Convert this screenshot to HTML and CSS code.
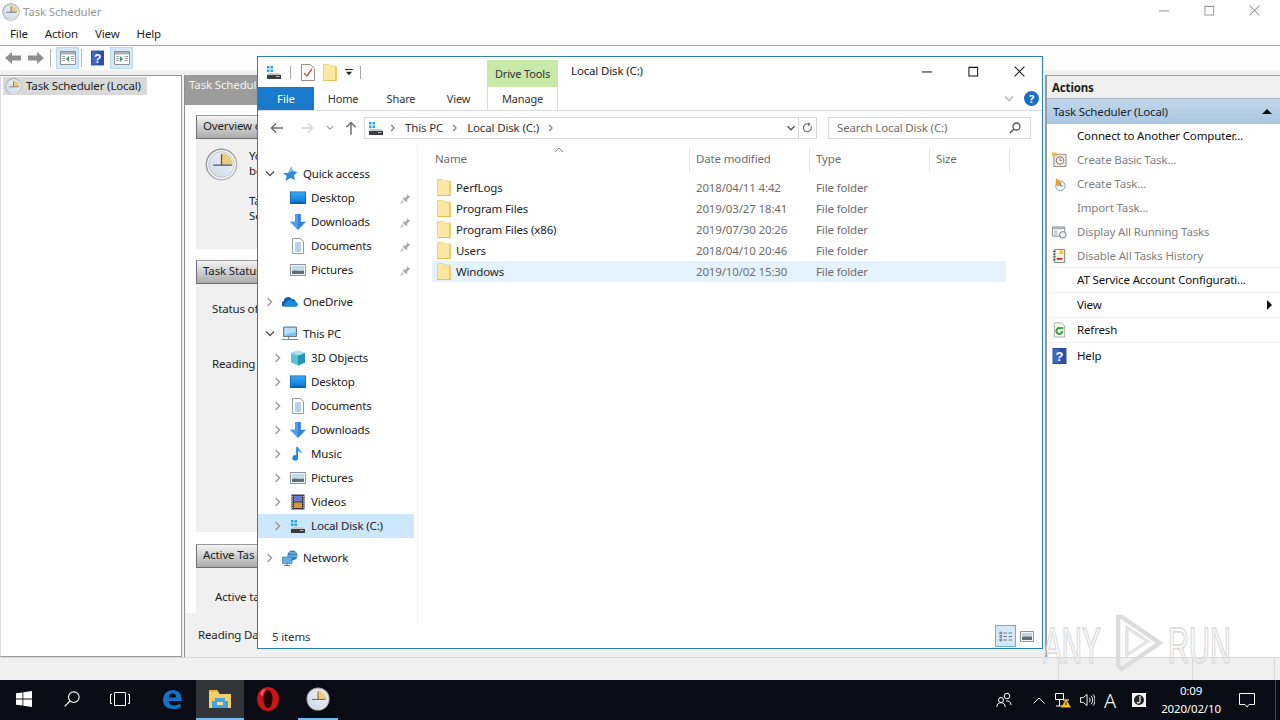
FILE: index.html
```html
<!DOCTYPE html>
<html lang="en">
<head>
  <meta charset="UTF-8" />
  <meta name="viewport" content="width=device-width, initial-scale=1.0" />
  <title>Task Scheduler</title>
  <link rel="stylesheet" href="styles.css">
</head>
<body>
  <svg class="icon-defs" width="0" height="0">
    <defs>
      <linearGradient id="faceGrad" x1="0" y1="1" x2="1" y2="0">
        <stop offset="0" stop-color="#c9d9e8" /><stop offset="1" stop-color="#f6f6f6" />
      </linearGradient>
      <linearGradient id="ringGrad" x1="0" y1="0" x2="1" y2="1">
        <stop offset="0" stop-color="#8b8b8b" /><stop offset="1" stop-color="#c4c4c4" />
      </linearGradient>
      <linearGradient id="blueGrad" x1="0" y1="0" x2="0" y2="1">
        <stop offset="0" stop-color="#39a7f5" /><stop offset="1" stop-color="#0f78d8" />
      </linearGradient>
      <symbol id="i-clock" viewBox="0 0 32 32">
        <circle cx="16" cy="16" r="15.4" fill="url(#ringGrad)" />
        <circle cx="16" cy="16" r="14" fill="#f7f7f7" />
        <circle cx="16" cy="16" r="12.4" fill="url(#faceGrad)" stroke="#a9b1ba" stroke-width=".6" />
        <path d="M16 16V5a11 11 0 0 1 11 11z" fill="#eccb7c" />
        <path d="M16 6v11M8 16.500h18" stroke="#4d5259" stroke-width="1.200" fill="none" />
      </symbol>
      <symbol id="i-drive" viewBox="0 0 16 16">
        <path d="M1 2h2.500v2.500H1zM4.500 2H7v2.500H4.500zM1 5.500h2.500V8H1zM4.500 5.500H7V8H4.500z" fill="#24a5e6" />
        <path d="M2 9h11l2 2H1z" fill="#c9ccce" />
        <path d="M1 11h14v4H1z" fill="#3a3d40" />
        <path d="M10 12.500h3.500" stroke="#b8bcc0" />
      </symbol>
      <symbol id="i-folder" viewBox="0 0 14 17">
        <path d="M.5.500h5.500l1.500 1.500h6v14.500H.5z" fill="#fde7a2" stroke="#eccb6e" stroke-width=".8" />
        <path d="M12 2.500h1.500v14H12z" fill="#efc95c" />
        <path d="M.5 16.500h13" stroke="#e6bf58" />
      </symbol>
      <symbol id="i-desktop" viewBox="0 0 16 16">
        <path d="M0 1.500h16v12.500H0z" fill="#085f9e" />
        <path d="M.7 2.200h14.600v10.800H.7z" fill="url(#blueGrad)" />
        <path d="M3 12.200h10" stroke="#0a5fa5" />
      </symbol>
      <symbol id="i-download" viewBox="0 0 16 16">
        <path d="M5.200 0h5.600v7.800H16L8 16 0 7.800h5.200z" fill="#2f84d8" />
        <path d="M5.200 0h2.800v15L0 7.800h5.200z" fill="#4d9fe8" />
      </symbol>
      <symbol id="i-doc" viewBox="0 0 16 16">
        <path d="M2.500 .5h8l3 3v12h-11z" fill="#fff" stroke="#93989e" />
        <path d="M5 5h6M5 7h6M5 9h6M5 11h6M5 13h6" stroke="#6da2d4" />
      </symbol>
      <symbol id="i-pictures" viewBox="0 0 16 16">
        <path d="M.5 2.500h15v11H.5z" fill="#f4f6f7" stroke="#8d9398" />
        <path d="M2 4h12v4.500H2z" fill="#c5dbea" />
        <path d="M2 9c4-1.500 8 .5 12-.5V12H2z" fill="#5d6e77" />
      </symbol>
      <symbol id="i-pin" viewBox="0 0 12 12">
        <path d="M7.500 .8l3.700 3.700-1.400.5-2 2 .1 2-1 1-4-4 1-1 2 .1 2-2z" fill="#a3a7ab" />
        <path d="M3.500 8.500L.8 11.200" stroke="#a3a7ab" stroke-width="1.200" />
      </symbol>
      <symbol id="i-star" viewBox="0 0 16 16">
        <path d="M9.500 .5l1.300 4.600L15.500 6l-3.600 3.200 1 5-4.300-2.300L3.500 15l1.200-5L1 7h5z" fill="#2e8ad8" />
        <path d="M6 7l3.500-6.500 1.300 4.600z" fill="#86c3f0" />
      </symbol>
      <symbol id="i-onedrive" viewBox="0 0 16 16">
        <path d="M1 12.500a3 3 0 0 1 .7-5.500 4.500 4.500 0 0 1 8.300-1.800 3.300 3.300 0 0 1 3.800 3 2.300 2.300 0 0 1 .7 4.300z" fill="#0a5cab" />
        <path d="M3.500 12.500a2.300 2.300 0 0 1 1-4.300 3.500 3.500 0 0 1 6.200-1 2.800 2.800 0 0 1 3 1.300 2.200 2.200 0 0 1 .6 4z" fill="#1d8ae0" />
      </symbol>
      <symbol id="i-pc" viewBox="0 0 16 16">
        <path d="M1.500 1h13v9.500h-13z" fill="#7cc5f2" stroke="#6b7c88" />
        <path d="M2.500 2h11v4L2.500 9z" fill="#b6e1fa" />
        <path d="M6.500 11v2M0 13.500h16" stroke="#7e8c96" stroke-width="1.200" />
      </symbol>
      <symbol id="i-cube" viewBox="0 0 16 16">
        <path d="M8 .5l7 2.500v9.500L8 15.500 1 12.500V3z" fill="#5fc3d6" />
        <path d="M8 5.500v10l7-3V3z" fill="#1f96b4" />
        <path d="M1 3l7 2.500L15 3 8 .5z" fill="#a9e6ee" />
      </symbol>
      <symbol id="i-music" viewBox="0 0 16 16">
        <path d="M8 1v10.800a2.800 2.800 0 1 1-1.800-2.600V1z" fill="#1a86dc" />
        <path d="M8 1c.3 2.500 4 3 3.500 7-.8-1.800-2-2.400-3.500-2.800z" fill="#3aa0ea" />
      </symbol>
      <symbol id="i-video" viewBox="0 0 16 16">
        <path d="M1.500 .5h13v15h-13z" fill="#3a3f4a" />
        <path d="M4 2h8v5.500H4z" fill="#6f79c9" />
        <path d="M4 8.500h8V14H4z" fill="#d3963c" />
        <path d="M2.500 2v12M13.500 2v12" stroke="#d5d5d5" stroke-dasharray="1 1.200" />
      </symbol>
      <symbol id="i-network" viewBox="0 0 16 16">
        <circle cx="10.500" cy="5.500" r="5" fill="#2e7fc4" />
        <path d="M7.500 3h6M6 6h9" stroke="#c9e1f3" stroke-width=".8" />
        <path d="M.5 7h9.500v6.500H.5z" fill="#59b0ec" stroke="#5d7488" stroke-width=".7" />
        <path d="M5 13.500V15M2 15.500h6" stroke="#607384" />
      </symbol>
      <symbol id="i-chev-right" viewBox="0 0 8 10">
        <path d="M1.500 1l4 4-4 4" fill="none" stroke="currentColor" stroke-width="1.500" />
      </symbol>
      <symbol id="i-chev-down" viewBox="0 0 10 8">
        <path d="M1 1.500l4 4 4-4" fill="none" stroke="currentColor" stroke-width="1.500" />
      </symbol>
      <symbol id="i-arrow-left" viewBox="0 0 16 14">
        <path d="M7 1.500L1.500 7 7 12.500M2 7h13" fill="none" stroke="currentColor" stroke-width="1.700" />
      </symbol>
      <symbol id="i-min" viewBox="0 0 12 12"><path d="M0 6.500h11" stroke="currentColor" fill="none" stroke-width="1.100" /></symbol>
      <symbol id="i-max" viewBox="0 0 12 12"><path d="M1 1.500h9.500V11H1z" stroke="currentColor" fill="none" stroke-width="1.100" /></symbol>
      <symbol id="i-close" viewBox="0 0 12 12"><path d="M.7.700l10.600 10.600M11.300.7L.7 11.300" stroke="currentColor" fill="none" stroke-width="1.100" /></symbol>
      <symbol id="i-help" viewBox="0 0 14 16">
        <path d="M0 0h14v16H0z" fill="#2b4ea8" />
        <path d="M1 1h6v14H1z" fill="#3f68c6" />
        <text x="7" y="13" text-anchor="middle" font-family="Liberation Sans" font-weight="700" font-size="13" fill="#fff">?</text>
      </symbol>
    </defs>
  </svg>

  <div class="app">
    <div class="app-title">
      <svg class="app-title-icon"><use href="#i-clock" /></svg>
      <span>Task Scheduler</span>
      <div class="app-controls">
        <svg><use href="#i-min" /></svg>
        <svg><use href="#i-max" /></svg>
        <svg><use href="#i-close" /></svg>
      </div>
    </div>
    <div class="menu-bar">
      <span>File</span><span>Action</span><span>View</span><span>Help</span>
    </div>
    <div class="tool-bar">
      <svg class="tool-arrow" viewBox="0 0 16 14"><path d="M0 7l7-6v3.500h9v5H7V13z" fill="#8f8f8f" /></svg>
      <svg class="tool-arrow" viewBox="0 0 16 14"><path d="M16 7L9 1v3.500H0v5h9V13z" fill="#8f8f8f" /></svg>
      <div class="tool-sep"></div>
      <div class="tool-btn">
        <svg viewBox="0 0 16 14"><path d="M.5.500h15v13H.5z" fill="#fff" stroke="#8b9298" /><path d="M1 1h14v2.500H1z" fill="#aab2b8" /><path d="M2 5h3v1H2zM2 7h3v1H2zM2 9h3v1H2zM11 5h3v1h-3zM11 7h3v1h-3zM11 9h3v1h-3z" fill="#9aa3aa" /><path d="M9 5v6L6 8z" fill="#3aa04a" /></svg>
      </div>
      <div class="tool-sep tool-sep-narrow"></div>
      <svg class="tool-help"><use href="#i-help" /></svg>
      <div class="tool-btn">
        <svg viewBox="0 0 16 14"><path d="M.5.500h15v13H.5z" fill="#fff" stroke="#8b9298" /><path d="M1 1h14v2.500H1z" fill="#aab2b8" /><path d="M2 5h3v1H2zM2 7h3v1H2zM2 9h3v1H2zM11 5h3v1h-3zM11 7h3v1h-3zM11 9h3v1h-3z" fill="#9aa3aa" /><path d="M6 5v6l3-3z" fill="#3aa04a" /></svg>
      </div>
    </div>

    <div class="app-main">
      <div class="tree-pane">
        <div class="tree-row">
          <svg><use href="#i-clock" /></svg>
          <span>Task Scheduler (Local)</span>
        </div>
      </div>

      <div class="center-pane">
        <div class="center-head">Task Schedul</div>
        <div class="center-body">
          <div class="section">
            <div class="section-head">Overview of</div>
            <div class="section-body overview-body">
              <svg class="overview-clock"><use href="#i-clock" /></svg>
              <div class="overview-text">
                <p>Yo<br>be</p>
                <p>Ta<br>Se</p>
              </div>
            </div>
          </div>
          <div class="section">
            <div class="section-head">Task Status</div>
            <div class="section-body status-body">
              <p class="status-line">Status of</p>
              <p class="status-line">Reading</p>
            </div>
          </div>
          <div class="section">
            <div class="section-head">Active Tas</div>
            <div class="section-body active-body">
              <p>Active ta</p>
            </div>
          </div>
        </div>
        <div class="center-foot">Reading Da</div>
      </div>

      <div class="actions-pane">
        <div class="actions-head">Actions</div>
        <div class="actions-group">
          <span>Task Scheduler (Local)</span>
          <i class="tri-up"></i>
        </div>
        <div class="action"><span class="action-icon"></span><span>Connect to Another Computer...</span></div>
        <div class="action action-off">
          <span class="action-icon">
            <svg viewBox="0 0 16 16"><path d="M2 2h13v13H2z" fill="#efe9dc" stroke="#8d8a82" /><circle cx="8.500" cy="8.500" r="4" fill="#fff" stroke="#7d6a58" /><path d="M8.500 6v2.500h2" stroke="#7d6a58" fill="none" /><path d="M0 0h5v4H0z" fill="#f2b84c" /></svg>
          </span><span>Create Basic Task...</span>
        </div>
        <div class="action action-off">
          <span class="action-icon">
            <svg viewBox="0 0 16 16"><circle cx="9" cy="10" r="5" fill="#fff" stroke="#6ea0c6" /><path d="M4 2l3 1.500 3 4-3 3-3-1z" fill="#eb9f32" /><path d="M9 7v3h3" stroke="#54718a" fill="none" /></svg>
          </span><span>Create Task...</span>
        </div>
        <div class="action action-off"><span class="action-icon"></span><span>Import Task...</span></div>
        <div class="action action-off">
          <span class="action-icon">
            <svg viewBox="0 0 16 16"><path d="M.5 2.500h13v10H.5z" fill="#fff" stroke="#8a9095" /><path d="M1 3h12v2H1z" fill="#a4adb3" /><path d="M2 7h4M2 9h4M2 11h4" stroke="#a6acb1" /><circle cx="11.500" cy="11" r="3.500" fill="#e9eef2" stroke="#6d767d" /></svg>
          </span><span>Display All Running Tasks</span>
        </div>
        <div class="action action-off action-line">
          <span class="action-icon">
            <svg viewBox="0 0 16 16"><path d="M2.500 1h11v14h-11z" fill="#f8f3df" stroke="#7e7e7e" /><path d="M1 3h3M1 6h3M1 9h3M1 12h3" stroke="#444" /><path d="M8 2h4v4H8z" fill="#eec23f" /><path d="M5 11h6" stroke="#b3363a" stroke-width="2" /></svg>
          </span><span>Disable All Tasks History</span>
        </div>
        <div class="action action-tall action-line"><span class="action-icon"></span><span>AT Service Account Configurati...</span></div>
        <div class="action action-tall action-line">
          <span class="action-icon"></span><span>View</span><i class="tri-right"></i>
        </div>
        <div class="action action-tall action-line">
          <span class="action-icon">
            <svg viewBox="0 0 16 16"><path d="M2.500 .5h8l3 3v12h-11z" fill="#f4f7f2" stroke="#a5aaa4" /><path d="M11 9a3.200 3.200 0 1 1-1-2.300" fill="none" stroke="#2f9e3e" stroke-width="2" /><path d="M9 5h3v3z" fill="#2f9e3e" /></svg>
          </span><span>Refresh</span>
        </div>
        <div class="action action-tall">
          <span class="action-icon"><svg><use href="#i-help" /></svg></span><span>Help</span>
        </div>
      </div>
    </div>

    <div class="app-status">
      <div class="status-cell status-cell-wide"></div>
      <div class="status-cell"></div>
      <div class="status-cell status-cell-end"></div>
    </div>
  </div>

  <!-- explorer window, sits on top of task scheduler -->
  <div class="explorer">
    <div class="ex-title">
      <div class="qat">
        <svg class="qat-drive"><use href="#i-drive" /></svg>
        <div class="qat-sep"></div>
        <svg class="qat-props" viewBox="0 0 14 17"><path d="M.5.500h9l4 4v12H.5z" fill="#fff" stroke="#9a9088" /><path d="M3 9l3 3 5-7" fill="none" stroke="#c9523c" stroke-width="1.400" /></svg>
        <svg class="qat-folder"><use href="#i-folder" /></svg>
        <svg class="qat-down" viewBox="0 0 9 8"><path d="M0 0h9v1H0zM1 3h7L4.500 7z" fill="#222" /></svg>
        <div class="qat-sep"></div>
      </div>
      <div class="tool-tab">Drive Tools</div>
      <div class="ex-name">Local Disk (C:)</div>
      <div class="ex-controls">
        <div><svg><use href="#i-min" /></svg></div>
        <div><svg><use href="#i-max" /></svg></div>
        <div><svg><use href="#i-close" /></svg></div>
      </div>
    </div>
    <div class="ribbon">
      <div class="rib-file">File</div>
      <div class="rib-tab rib-home">Home</div>
      <div class="rib-tab rib-share">Share</div>
      <div class="rib-tab rib-view">View</div>
      <div class="rib-tab rib-manage">Manage</div>
      <svg class="rib-chev"><use href="#i-chev-down" /></svg>
      <div class="rib-help">?</div>
    </div>
    <div class="addr-row">
      <svg class="nav-back"><use href="#i-arrow-left" /></svg>
      <svg class="nav-fwd"><use href="#i-arrow-left" /></svg>
      <svg class="nav-drop"><use href="#i-chev-down" /></svg>
      <svg class="nav-up" viewBox="0 0 14 16"><path d="M1.500 7L7 1.500 12.500 7M7 2v14" fill="none" stroke="currentColor" stroke-width="1.700" /></svg>
      <div class="addr-box">
        <svg class="addr-drive"><use href="#i-drive" /></svg>
        <svg class="crumb-sep"><use href="#i-chev-right" /></svg>
        <span>This PC</span>
        <svg class="crumb-sep"><use href="#i-chev-right" /></svg>
        <span>Local Disk (C:)</span>
        <svg class="crumb-sep"><use href="#i-chev-right" /></svg>
        <svg class="addr-drop"><use href="#i-chev-down" /></svg>
        <div class="addr-refresh">
          <svg viewBox="0 0 12 13"><path d="M9.800 4.500a4.300 4.300 0 1 1-1.600-1.900" fill="none" stroke="#6f6f6f" stroke-width="1.300" /><path d="M6.500 0l3 2.600-3 2z" fill="#6f6f6f" /></svg>
        </div>
      </div>
      <div class="search-box">
        <span>Search Local Disk (C:)</span>
        <svg viewBox="0 0 12 12"><circle cx="7.500" cy="4.500" r="3.500" fill="none" stroke="#555" stroke-width="1.300" /><path d="M5 7l-4 4" stroke="#555" stroke-width="1.600" /></svg>
      </div>
    </div>

    <div class="ex-body">
      <div class="nav-pane">
        <div class="nav-row">
          <svg class="nav-chev open"><use href="#i-chev-down" /></svg>
          <svg class="nav-icon"><use href="#i-star" /></svg><span>Quick access</span>
        </div>
        <div class="nav-row sub">
          <i class="nav-chev"></i><svg class="nav-icon"><use href="#i-desktop" /></svg><span>Desktop</span>
          <svg class="nav-pin"><use href="#i-pin" /></svg>
        </div>
        <div class="nav-row sub">
          <i class="nav-chev"></i><svg class="nav-icon"><use href="#i-download" /></svg><span>Downloads</span>
          <svg class="nav-pin"><use href="#i-pin" /></svg>
        </div>
        <div class="nav-row sub">
          <i class="nav-chev"></i><svg class="nav-icon"><use href="#i-doc" /></svg><span>Documents</span>
          <svg class="nav-pin"><use href="#i-pin" /></svg>
        </div>
        <div class="nav-row sub">
          <i class="nav-chev"></i><svg class="nav-icon"><use href="#i-pictures" /></svg><span>Pictures</span>
          <svg class="nav-pin"><use href="#i-pin" /></svg>
        </div>
        <div class="nav-row group">
          <svg class="nav-chev"><use href="#i-chev-right" /></svg>
          <svg class="nav-icon"><use href="#i-onedrive" /></svg><span>OneDrive</span>
        </div>
        <div class="nav-row group">
          <svg class="nav-chev open"><use href="#i-chev-down" /></svg>
          <svg class="nav-icon"><use href="#i-pc" /></svg><span>This PC</span>
        </div>
        <div class="nav-row sub">
          <svg class="nav-chev"><use href="#i-chev-right" /></svg>
          <svg class="nav-icon"><use href="#i-cube" /></svg><span>3D Objects</span>
        </div>
        <div class="nav-row sub">
          <svg class="nav-chev"><use href="#i-chev-right" /></svg>
          <svg class="nav-icon"><use href="#i-desktop" /></svg><span>Desktop</span>
        </div>
        <div class="nav-row sub">
          <svg class="nav-chev"><use href="#i-chev-right" /></svg>
          <svg class="nav-icon"><use href="#i-doc" /></svg><span>Documents</span>
        </div>
        <div class="nav-row sub">
          <svg class="nav-chev"><use href="#i-chev-right" /></svg>
          <svg class="nav-icon"><use href="#i-download" /></svg><span>Downloads</span>
        </div>
        <div class="nav-row sub">
          <svg class="nav-chev"><use href="#i-chev-right" /></svg>
          <svg class="nav-icon"><use href="#i-music" /></svg><span>Music</span>
        </div>
        <div class="nav-row sub">
          <svg class="nav-chev"><use href="#i-chev-right" /></svg>
          <svg class="nav-icon"><use href="#i-pictures" /></svg><span>Pictures</span>
        </div>
        <div class="nav-row sub">
          <svg class="nav-chev"><use href="#i-chev-right" /></svg>
          <svg class="nav-icon"><use href="#i-video" /></svg><span>Videos</span>
        </div>
        <div class="nav-row sub selected">
          <svg class="nav-chev"><use href="#i-chev-right" /></svg>
          <svg class="nav-icon"><use href="#i-drive" /></svg><span>Local Disk (C:)</span>
        </div>
        <div class="nav-row group">
          <svg class="nav-chev"><use href="#i-chev-right" /></svg>
          <svg class="nav-icon"><use href="#i-network" /></svg><span>Network</span>
        </div>
      </div>

      <div class="file-pane">
        <div class="file-head">
          <div class="col-name">Name<svg class="sort-caret" viewBox="0 0 10 6"><path d="M1 5l4-4 4 4" fill="none" stroke="#8a8a8a" /></svg></div>
          <div>Date modified</div>
          <div>Type</div>
          <div>Size</div>
        </div>
        <div class="file-row">
          <div class="file-name"><svg><use href="#i-folder" /></svg>PerfLogs</div>
          <div>2018/04/11 4:42</div><div>File folder</div>
        </div>
        <div class="file-row">
          <div class="file-name"><svg><use href="#i-folder" /></svg>Program Files</div>
          <div>2019/03/27 18:41</div><div>File folder</div>
        </div>
        <div class="file-row">
          <div class="file-name"><svg><use href="#i-folder" /></svg>Program Files (x86)</div>
          <div>2019/07/30 20:26</div><div>File folder</div>
        </div>
        <div class="file-row">
          <div class="file-name"><svg><use href="#i-folder" /></svg>Users</div>
          <div>2018/04/10 20:46</div><div>File folder</div>
        </div>
        <div class="file-row hover">
          <div class="file-name"><svg><use href="#i-folder" /></svg>Windows</div>
          <div>2019/10/02 15:30</div><div>File folder</div>
        </div>
      </div>
    </div>

    <div class="ex-status">
      <span>5 items</span>
      <div class="view-btns">
        <div class="view-btn active">
          <svg viewBox="0 0 16 12"><path d="M1 1h2v2H1zM1 5h2v2H1zM1 9h2v2H1z" fill="none" stroke="#555" stroke-width=".8" /><path d="M5 2h4M5 6h4M5 10h4M11 2h4M11 6h4M11 10h4" stroke="#666" /></svg>
        </div>
        <div class="view-btn">
          <svg viewBox="0 0 14 11"><path d="M.5.500h13v10H.5z" fill="#f4f6f7" stroke="#8d9398" /><path d="M2 2h10v3.500H2z" fill="#bcd6e8" /><path d="M2 6c3-1 7 0 10-.500V9H2z" fill="#5d6e77" /></svg>
        </div>
      </div>
    </div>
  </div>

  <!-- faint vendor watermark -->
  <div class="watermark">
    <span class="wm-text wm-any">ANY</span>
    <svg viewBox="0 0 60 64"><path d="M6 2v56l4 4 44-30L10 2z" fill="none" stroke="#dcdcdc" stroke-width="5" /><path d="M16 14v32l24-16z" fill="none" stroke="#e4e4e4" stroke-width="4" /></svg>
    <span class="wm-text wm-run">RUN</span>
  </div>

  <div class="taskbar">
    <div class="task-item task-start">
      <svg viewBox="0 0 16 16"><path d="M0 2.300l6.500-.9v6.200H0zM7.300 1.300L16 0v7.600H7.300zM0 8.400h6.500v6.200L0 13.700zM7.300 8.400H16V16l-8.700-1.200z" fill="#fff" /></svg>
    </div>
    <div class="task-item">
      <svg viewBox="0 0 16 16"><circle cx="9.800" cy="6.200" r="5.300" fill="none" stroke="#fff" stroke-width="1.100" /><path d="M6 10L.7 15.300" stroke="#fff" stroke-width="1.200" /></svg>
    </div>
    <div class="task-item task-view">
      <svg viewBox="0 0 20 14"><path d="M4.500.5h11v13h-11z" fill="none" stroke="#fff" /><path d="M2 2.500H.5v9H2M18 2.500h1.500v9H18" fill="none" stroke="#fff" /></svg>
    </div>
    <div class="task-item task-edge">
      <svg viewBox="0 0 20 20"><path d="M1 11C1 5 5.500 1 11 1c5 0 8.500 3.500 8.500 9v2H6.500c.3 3 2.500 4.500 5.500 4.500 2.300 0 4.500-.7 6.500-2v4c-2 1-4.500 1.500-7 1.500C5 20 1 16.500 1 11zm5.600-2.500h7.600C14 6 12.700 4.600 10.600 4.600 8.700 4.600 7.200 6 6.600 8.500z" fill="#1272c8" /></svg>
    </div>
    <div class="task-item task-explorer">
      <svg viewBox="0 0 22 20"><path d="M0 3h9l2 2h11v14H0z" fill="#f3cd6a" /><path d="M0 1h8l2 2H0z" fill="#e9b93f" /><path d="M6 9h10v3h3v7H3v-7h3z" fill="#3ea6e6" /><path d="M8 13h6v3H8z" fill="#f5dd98" /></svg>
    </div>
    <div class="task-item task-opera">
      <svg viewBox="0 0 22 24"><ellipse cx="11" cy="12" rx="11" ry="12" fill="#c8141b" /><ellipse cx="11" cy="12" rx="4.500" ry="9" fill="#220405" /><path d="M3 7c1-3 3-5 6-5.500-2 2-3 5-3 8z" fill="#ef5a5e" /></svg>
    </div>
    <div class="task-item task-clock">
      <svg><use href="#i-clock" /></svg>
    </div>

    <div class="tray">
      <svg class="tray-people" viewBox="0 0 16 16"><circle cx="11" cy="4" r="2.800" fill="none" stroke="#fff" /><circle cx="5" cy="8" r="2.500" fill="none" stroke="#fff" /><path d="M.8 15c0-3 2-4.300 4.200-4.300S9.200 12 9.200 15M10 9c2.500-.5 5 1 5 4" fill="none" stroke="#fff" /></svg>
      <svg class="tray-up" viewBox="0 0 12 7"><path d="M.5 6.500L6 1l5.500 5.500" fill="none" stroke="#fff" /></svg>
      <svg class="tray-net" viewBox="0 0 16 16"><path d="M.5 1.500h8v6h-8zM4.500 7.500v6.500M1 14h8M8 8h6" fill="none" stroke="#fff" /><path d="M11 7l5 8.500H6z" fill="#f2c011" /><path d="M11 10v3" stroke="#222" /></svg>
      <svg class="tray-vol" viewBox="0 0 16 16"><path d="M.5 5.500h3l4-3.500v12l-4-3.500h-3z" fill="none" stroke="#fff" /><path d="M10 5.500c1 1.500 1 3.500 0 5M12 3.500c2 2.500 2 6.500 0 9M14 2c2.500 3 2.500 9 0 12" fill="none" stroke="#fff" /></svg>
      <span class="tray-ime">A</span>
      <svg class="tray-j" viewBox="0 0 14 14"><path d="M0 0h14v14H0z" fill="#f2f2f2" /><circle cx="7" cy="7" r="5" fill="#222" /><path d="M8 3v5.500c0 1.500-2 1.800-3 .7" fill="none" stroke="#f2f2f2" stroke-width="1.300" /></svg>
      <div class="tray-time"><div>0:09</div><div>2020/02/10</div></div>
      <svg class="tray-note" viewBox="0 0 16 16"><path d="M.5 1.500h15v11H10L8 15l-2-2.500H.5z" fill="none" stroke="#fff" /></svg>
      <div class="tray-desk"></div>
    </div>
  </div>
</body>
</html>
```
FILE: styles.css
```css
/* Windows Server desktop: task scheduler with an explorer window on top */
* {
  box-sizing: border-box;
}

html, body {
  height: 100%;
}

body {
  font-family: "Noto Sans", "Open Sans", sans-serif;
  font-size: 11.5px;
  letter-spacing: -0.15px;
  white-space: nowrap;
  color: #1e1e1e;
  margin: 0;
  padding: 0;
  width: 1280px;
  height: 720px;
  overflow: hidden;
  position: relative;
  background-color: #f0f0f0;
}

svg {
  display: block;
  flex: none;
}

p {
  margin: 0;
}

.icon-defs {
  position: absolute;
}

/* task scheduler window */
.app {
  height: 680px;
  display: flex;
  flex-direction: column;
  background-color: #f0f0f0;
}

.app-title {
  height: 23px;
  display: flex;
  align-items: center;
  background: white;
  padding-left: 2px;
  color: #999;
}

.app-title-icon {
  width: 18px;
  height: 18px;
  margin-right: 3px;
}

.app-controls {
  margin-left: auto;
  margin-bottom: 2px;
  display: flex;
  color: #9a9a9a;
  padding-right: 20px;
  gap: 34px;
}

.app-controls svg {
  width: 11px;
  height: 11px;
}

.menu-bar {
  height: 23px;
  display: flex;
  align-items: center;
  gap: 17px;
  padding: 0 0 1px 10px;
  background: white;
  border-bottom: 1px solid #a9a9a9;
}

.tool-bar {
  height: 24px;
  display: flex;
  align-items: center;
  background: #fdfdfd;
  padding-left: 5px;
  margin-bottom: 5px;
}

.tool-arrow {
  width: 16px;
  height: 14px;
  margin-right: 7px;
}

.tool-sep {
  width: 1px;
  height: 18px;
  background: #b5b5b5;
  margin-right: 5px;
  margin-left: -1px;
}

.tool-sep-narrow {
  margin-left: 2px;
  margin-right: 9px;
}

.tool-btn {
  width: 23px;
  height: 22px;
  display: flex;
  align-items: center;
  justify-content: center;
  background: #d5e6f5;
  border: 1px solid #bcd8f0;
}

.tool-btn svg {
  width: 16px;
  height: 14px;
}

.tool-help {
  width: 13px;
  height: 16px;
  margin-right: 6px;
}

.app-main {
  flex: 1;
  min-height: 0;
  display: flex;
  gap: 2px;
}

.tree-pane {
  width: 182px;
  background: white;
  border: 1px solid #9a9a9a;
  border-left-color: #dcdcdc;
  padding: 1px 2px;
}

.tree-row {
  display: flex;
  align-items: center;
  gap: 4px;
  width: 144px;
  height: 18px;
  padding-left: 2px;
  background: #d9d9d9;
}

.tree-row svg {
  width: 17px;
  height: 17px;
}

.tree-row span {
  margin-bottom: 1px;
}

.center-pane {
  width: 859px;
  display: flex;
  flex-direction: column;
  overflow: hidden;
  border-left: 1px solid #8f8f8f;
  background: white;
}

.center-head {
  height: 30px;
  flex: none;
  padding: 2px 4px;
  background: #9c9c9c;
  color: #f4f4f4;
}

.center-body {
  flex: 1;
  padding: 10px 11px 0;
}

.section-head {
  height: 24px;
  padding: 0 6px;
  line-height: 19px;
  background: linear-gradient(#f4f4f4, #ababab);
  border: 1px solid #6e6e6e;
  border-top-color: #9a9a9a;
}

.section-body {
  background: #f0f0f0;
}

.overview-body {
  height: 110px;
  margin-bottom: 11px;
  display: flex;
  padding: 9px 0 0 9px;
}

.overview-clock {
  width: 33px;
  height: 33px;
  margin-right: 11px;
}

.overview-text p {
  line-height: 15px;
  margin-bottom: 15px;
}

.status-body {
  height: 248px;
  margin-bottom: 12px;
  padding: 15px 0 0 16px;
}

.status-line {
  line-height: 20px;
  margin-bottom: 35px;
}

.active-body {
  height: 45px;
  padding: 21px 0 0 19px;
}

.center-foot {
  height: 44px;
  flex: none;
  background: #f0f0f0;
  padding: 14px 0 0 13px;
}

.actions-pane {
  flex: 1;
  background: white;
  border-left: 2px solid #8f9ba5;
  border-top: 1px solid #9a9a9a;
}

.actions-head {
  height: 23px;
  padding: 4px 0 0 5px;
  background: #f0f0f0;
  border-bottom: 1px solid #b0bcc5;
  font-weight: 700;
}

.actions-group {
  height: 25px;
  display: flex;
  align-items: center;
  justify-content: space-between;
  padding: 0 8px 1px 6px;
  background: linear-gradient(#c2d8ec, #a9c6e0);
  color: #17222c;
}

.tri-up {
  width: 0;
  height: 0;
  border: 5px solid transparent;
  border-top: 0;
  border-bottom: 5px solid #111;
}

.tri-right {
  width: 0;
  height: 0;
  margin-left: auto;
  margin-right: 8px;
  border: 5px solid transparent;
  border-right: 0;
  border-left: 5px solid #111;
}

.action {
  height: 24px;
  display: flex;
  align-items: center;
  padding-left: 5px;
  color: #111;
}

.action > span:not(.action-icon) {
  margin-bottom: 1px;
}

.action-off {
  color: #7f7f7f;
}

.action-tall {
  height: 25px;
}

.action-line {
  border-bottom: 1px solid #f0f0f0;
}

.action-icon {
  width: 15px;
  height: 16px;
  margin-right: 10px;
  flex: none;
}

.action-icon svg {
  width: 15px;
  height: 16px;
}

.app-status {
  height: 23px;
  display: flex;
  background: #f0f0f0;
  border-top: 1px solid #d8d8d8;
}

.status-cell {
  width: 134px;
  border-right: 1px solid #d8d8d8;
}

.status-cell-wide {
  width: 1059px;
}

.status-cell-end {
  width: 82px;
}

/* explorer window */
.explorer {
  position: absolute;
  left: 257px;
  top: 56px;
  width: 786px;
  height: 593px;
  display: flex;
  flex-direction: column;
  background: white;
  border: 1px solid #2f7eb5;
}

.ex-title {
  height: 30px;
  flex: none;
  display: flex;
}

.qat {
  width: 229px;
  display: flex;
  align-items: center;
  padding: 0 0 0 8px;
}

.qat-drive {
  width: 16px;
  height: 16px;
  margin-right: 8px;
}

.qat-sep {
  width: 1px;
  height: 13px;
  background: #a8a8a8;
}

.qat-props {
  width: 14px;
  height: 17px;
  margin: 0 8px 0 10px;
}

.qat-folder {
  width: 14px;
  height: 17px;
  margin-right: 8px;
}

.qat-down {
  width: 8px;
  height: 7px;
  margin-right: 7px;
}

.tool-tab {
  width: 71px;
  margin-top: 3px;
  background: #c9e9a9;
  text-align: center;
  line-height: 27px;
  font-size: 11px;
  color: #333;
}

.ex-name {
  padding: 6px 0 0 13px;
  color: #222;
}

.ex-controls {
  margin-left: auto;
  display: flex;
  color: #111;
}

.ex-controls div {
  width: 46px;
  padding-bottom: 2px;
  display: flex;
  align-items: center;
  justify-content: center;
}

.ex-controls svg {
  width: 11px;
  height: 11px;
}

.ribbon {
  height: 24px;
  flex: none;
  display: flex;
  align-items: stretch;
  border-bottom: 1px solid #dadbdc;
}

.rib-file {
  width: 56px;
  background: #1979ca;
  color: white;
  text-align: center;
  line-height: 23px;
}

.rib-tab {
  text-align: center;
  line-height: 24px;
  font-size: 11px;
  color: #333;
}

.rib-home {
  width: 58px;
}

.rib-share {
  width: 58px;
}

.rib-view {
  width: 57px;
}

.rib-manage {
  width: 71px;
  border-left: 1px solid #dadbdc;
  border-right: 1px solid #dadbdc;
}

.rib-chev {
  width: 10px;
  height: 8px;
  margin: 8px 0 0 446px;
  color: #b9b9b9;
}

.rib-help {
  width: 15px;
  height: 15px;
  margin: 4px 0 0 10px;
  border-radius: 50%;
  background: #1a6fc0;
  color: white;
  font-weight: 700;
  text-align: center;
  line-height: 15px;
  font-size: 11px;
}

.addr-row {
  height: 34px;
  flex: none;
  display: flex;
  align-items: center;
  padding-left: 12px;
  color: #6c6c6c;
}

.nav-back {
  width: 14px;
  height: 12px;
  margin-right: 16px;
}

.nav-fwd {
  width: 14px;
  height: 12px;
  margin-right: 12px;
  color: #d5d5d5;
  transform: scaleX(-1);
}

.nav-drop {
  width: 8px;
  height: 6px;
  margin-right: 11px;
  color: #9c9c9c;
}

.nav-up {
  width: 12px;
  height: 14px;
  margin-right: 7px;
}

.addr-box {
  width: 453px;
  height: 22px;
  display: flex;
  align-items: center;
  padding-left: 3px;
  border: 1px solid #d9d9d9;
  color: #333;
}

.addr-box span {
  margin-bottom: 1px;
}

.addr-drive {
  width: 16px;
  height: 16px;
}

.crumb-sep {
  width: 6px;
  height: 8px;
  margin: 0 9px 0 6px;
  color: #7d7d7d;
}

.addr-box span + .crumb-sep {
  margin-left: 9px;
}

.addr-drop {
  width: 10px;
  height: 7px;
  margin-left: auto;
  margin-right: 2px;
  color: #555;
}

.addr-refresh {
  width: 18px;
  height: 20px;
  flex: none;
  display: flex;
  align-items: center;
  justify-content: center;
  border-left: 1px solid #d9d9d9;
}

.addr-refresh svg {
  width: 11px;
  height: 12px;
}

.search-box {
  width: 203px;
  height: 22px;
  margin-left: 11px;
  display: flex;
  align-items: center;
  justify-content: space-between;
  padding: 0 9px 1px 8px;
  border: 1px solid #d9d9d9;
  color: #6d6d6d;
}

.search-box svg {
  width: 12px;
  height: 12px;
}

.ex-body {
  flex: 1;
  min-height: 0;
  display: flex;
}

.nav-pane {
  width: 160px;
  padding: 17px 3px 0 0;
  border-right: 1px solid #f2f2f2;
}

.nav-row {
  height: 24px;
  display: flex;
  align-items: center;
  padding: 0 3px 0 7px;
  color: #222;
}

.nav-row span {
  margin-bottom: 1px;
}

.nav-row.sub {
  padding-left: 15px;
}

.nav-row.group {
  margin-top: 8px;
}

.nav-row.selected {
  background: #cce6fa;
}

.nav-chev {
  width: 8px;
  height: 10px;
  margin: 0 1px;
  color: #9b9b9b;
}

.nav-chev.open {
  width: 10px;
  height: 8px;
  margin: 0;
  color: #555;
}

.nav-icon {
  width: 16px;
  height: 16px;
  margin: 0 5px 0 7px;
}

.nav-pin {
  width: 11px;
  height: 11px;
  margin-left: auto;
}

.file-pane {
  flex: 1;
  padding: 3px 0 0 14px;
  color: #6d6d6d;
}

.file-head {
  display: grid;
  grid-template-columns: 258px 120px 120px 80px;
  height: 24px;
  margin-bottom: 5px;
  line-height: 22px;
}

.file-head > div {
  padding-left: 6px;
  border-right: 1px solid #e5e5e5;
}

.file-head .col-name {
  padding-left: 3px;
  position: relative;
}

.sort-caret {
  position: absolute;
  left: 122px;
  top: -1px;
  width: 10px;
  height: 6px;
}

.file-row {
  display: grid;
  grid-template-columns: 257px 120px 120px 77px;
  width: 574px;
  height: 21px;
  line-height: 21px;
}

.file-row > div {
  padding-left: 7px;
}

.file-row > .file-name {
  display: flex;
  align-items: flex-start;
  padding-left: 5px;
  color: #222;
}

.file-name svg {
  width: 14px;
  height: 17px;
  margin: 2px 5px 0 0;
}

.file-row.hover {
  background: #e5f3ff;
}

.ex-status {
  height: 24px;
  flex: none;
  display: flex;
  align-items: center;
  justify-content: space-between;
  padding-left: 14px;
  padding-right: 8px;
  color: #333;
}

.view-btns {
  display: flex;
  gap: 4px;
}

.view-btn {
  width: 14px;
  height: 22px;
  display: flex;
  align-items: center;
  justify-content: center;
}

.view-btn.active {
  width: 21px;
  background: #d5e8f8;
  border: 1px solid #68b0e0;
}

.view-btn svg {
  width: 14px;
  height: 11px;
}

.watermark {
  position: absolute;
  left: 1043px;
  top: 612px;
  width: 189px;
  height: 62px;
  display: flex;
  align-items: center;
}

.watermark svg {
  width: 52px;
  height: 62px;
  margin: 0 5px 0 10px;
}

.wm-text {
  display: block;
  width: 60px;
  font-family: "Liberation Sans", sans-serif;
  font-size: 50px;
  line-height: 50px;
  letter-spacing: 0;
  color: transparent;
  -webkit-text-stroke: 2px #dedede;
  transform-origin: left center;
  transform: scaleX(.56);
  margin-top: 6px;
}

.wm-run {
  margin-left: -2px;
  transform: scaleX(.58);
}

/* taskbar */
.taskbar {
  height: 40px;
  display: flex;
  align-items: stretch;
  background: #090c14;
  color: white;
  font-size: 12px;
}

.task-item {
  width: 48px;
  display: flex;
  align-items: center;
  justify-content: center;
  border-bottom: 2px solid transparent;
}

.task-item svg {
  width: 16px;
  height: 16px;
}

.task-view svg {
  width: 20px;
  height: 14px;
}

.task-edge {
  margin-left: 4px;
}

.task-edge svg {
  width: 20px;
  height: 20px;
}

.task-explorer {
  background: #333538;
  border-bottom-color: #76b9ed;
}

.task-explorer svg {
  width: 22px;
  height: 20px;
}

.task-opera svg {
  width: 22px;
  height: 24px;
}

.task-clock {
  width: 40px;
  margin-left: 6px;
  border-bottom-color: #76b9ed;
}

.task-clock svg {
  width: 24px;
  height: 24px;
}

.tray {
  margin-left: auto;
  display: flex;
  align-items: center;
}

.tray-people {
  width: 16px;
  height: 16px;
  margin-right: 21px;
}

.tray-up {
  width: 12px;
  height: 7px;
  margin-right: 10px;
}

.tray-net {
  width: 16px;
  height: 16px;
  margin-right: 9px;
}

.tray-vol {
  width: 15px;
  height: 16px;
  margin-right: 8px;
}

.tray-ime {
  width: 14px;
  font-size: 20px;
  margin-right: 15px;
  text-align: center;
  font-weight: 300;
}

.tray-j {
  width: 14px;
  height: 14px;
  margin-right: 10px;
}

.tray-time {
  width: 70px;
  text-align: center;
  line-height: 18px;
  margin-right: 13px;
  font-size: 11.5px;
}

.tray-note {
  width: 16px;
  height: 16px;
  margin-right: 20px;
}

.tray-desk {
  width: 1px;
  height: 40px;
  background: #45474b;
  margin-right: 4px;
}
```
